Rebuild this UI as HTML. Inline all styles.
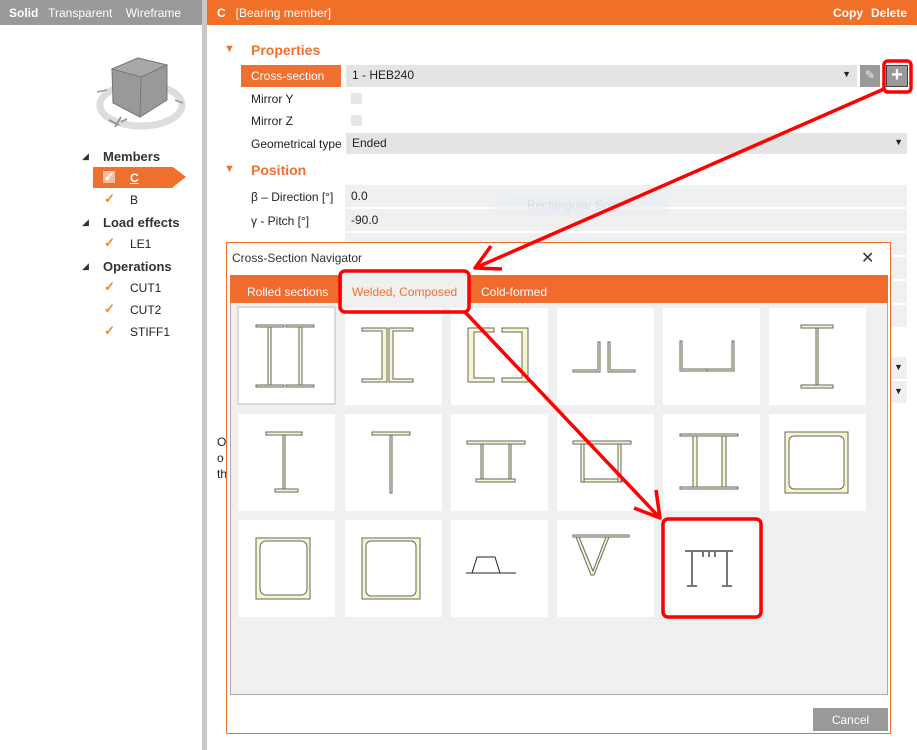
<!DOCTYPE html>
<html><head><meta charset="utf-8"><style>
*{margin:0;padding:0;box-sizing:border-box}
body{width:917px;height:750px;position:relative;overflow:hidden;background:#fff;font-family:"Liberation Sans",sans-serif;font-size:12px;color:#222}
.a{position:absolute}
.or{color:#f07030}
.row{position:absolute;left:345px;right:10px;height:22px;background:#f0f0f0;padding:4px 6px}
.lbl{position:absolute;left:251px}
.ck{position:absolute;left:104px;color:#f08a20;font-size:13px;font-weight:bold}
</style></head><body>
<div class="a" style="left:0;top:0;width:202px;height:25px;background:#999;color:#fff;font-size:12px;padding:6px 9px;white-space:nowrap"><b>Solid</b>&nbsp;&nbsp; Transparent &nbsp;&nbsp; Wireframe</div>
<div class="a" style="left:202px;top:0;width:5px;height:750px;background:#c8c8c8"></div>
<!-- cube -->
<svg class="a" style="left:95px;top:52px" width="100" height="80">
<ellipse cx="46" cy="53" rx="41" ry="21" fill="none" stroke="#ddd" stroke-width="7"/>
<polygon points="17,17 43,6 72,13 72,48 45,65 18,51" fill="#999" stroke="#777"/>
<polygon points="17,17 43,6 72,13 46,25" fill="#a8a8a8" stroke="#777"/>
<line x1="46" y1="25" x2="45" y2="65" stroke="#777"/>
<path d="M20,75 L26,65 M14,68 l10,5 M26,70 l6,-3" stroke="#999" stroke-width="2" fill="none"/>
<path d="M2,40 l10,-2 M80,48 l8,3" stroke="#999" stroke-width="1.5"/>
</svg>
<div class="a" style="left:82px;top:151px;font-size:9px;color:#333">◢</div>
<div class="a" style="left:103px;top:149px;font-weight:bold;font-size:13px;color:#333">Members</div>
<div class="a" style="left:93px;top:167px;width:80px;height:21px;background:#f07030"></div>
<div class="a" style="left:173px;top:167px;width:0;height:0;border-top:10.5px solid transparent;border-bottom:10.5px solid transparent;border-left:13px solid #f07030"></div>
<div class="a" style="left:103px;top:171px;width:12px;height:12px;background:#f6c0a0"></div>
<div class="ck" style="top:169px;color:#fff">✓</div>
<div class="a" style="left:130px;top:171px;color:#fff;text-decoration:underline;font-weight:bold">C</div>
<div class="ck" style="top:191px">✓</div><div class="a" style="left:130px;top:193px">B</div>
<div class="a" style="left:82px;top:217px;font-size:9px;color:#333">◢</div>
<div class="a" style="left:103px;top:215px;font-weight:bold;font-size:13px;color:#333">Load effects</div>
<div class="ck" style="top:235px">✓</div><div class="a" style="left:130px;top:237px">LE1</div>
<div class="a" style="left:82px;top:261px;font-size:9px;color:#333">◢</div>
<div class="a" style="left:103px;top:259px;font-weight:bold;font-size:13px;color:#333">Operations</div>
<div class="ck" style="top:279px">✓</div><div class="a" style="left:130px;top:281px">CUT1</div>
<div class="ck" style="top:301px">✓</div><div class="a" style="left:130px;top:303px">CUT2</div>
<div class="ck" style="top:323px">✓</div><div class="a" style="left:130px;top:325px">STIFF1</div>
<div class="a" style="left:207px;top:0;width:710px;height:25px;background:#f07028;color:#fff;padding:6px 10px;font-size:12px"><b>C</b>&nbsp;&nbsp; [Bearing member]</div>
<div class="a" style="left:833px;top:6px;color:#fff;font-weight:bold">Copy</div>
<div class="a" style="left:871px;top:6px;color:#fff;font-weight:bold">Delete</div>
<div class="a or" style="left:224px;top:43px;font-size:11px">▼</div>
<div class="a or" style="left:251px;top:42px;font-size:14px;font-weight:bold">Properties</div>
<div class="a" style="left:241px;top:65px;width:100px;height:22px;background:#f07030;color:#fff;padding:4px 10px">Cross-section</div>
<div class="a" style="left:346px;top:65px;width:511px;height:22px;background:#e4e4e4;padding:3px 6px">1 - HEB240<span style="position:absolute;right:6px;top:4px;font-size:9px">▼</span></div>
<div class="a" style="left:860px;top:65px;width:20px;height:22px;background:#999;color:#eee;text-align:center;padding-top:3px">✎</div>
<div class="a" style="left:886px;top:65px;width:22px;height:22px;background:#999;border:1px solid #444;color:#fff;font-size:20px;line-height:18px;text-align:center;font-weight:bold">+</div>
<div class="lbl" style="top:92px">Mirror Y</div><div class="a" style="left:351px;top:93px;width:11px;height:11px;background:#e6e6e6;border-radius:2px"></div>
<div class="lbl" style="top:114px">Mirror Z</div><div class="a" style="left:351px;top:115px;width:11px;height:11px;background:#e6e6e6;border-radius:2px"></div>
<div class="lbl" style="top:137px">Geometrical type</div>
<div class="a" style="left:346px;top:133px;width:561px;height:21px;background:#e4e4e4;padding:3px 6px">Ended<span style="position:absolute;right:4px;top:4px;font-size:9px">▼</span></div>
<div class="a or" style="left:224px;top:163px;font-size:11px">▼</div>
<div class="a or" style="left:251px;top:162px;font-size:14px;font-weight:bold">Position</div>
<div class="lbl" style="top:190px">β – Direction [°]</div><div class="row" style="top:185px">0.0</div>
<div class="lbl" style="top:214px">γ - Pitch [°]</div><div class="row" style="top:209px">-90.0</div>
<div class="a" style="left:495px;top:194px;width:173px;height:22px;background:#e8eef2;opacity:.6;color:#ccd;padding:4px 32px">Rectangular Snip</div>
<div class="row" style="top:233px"></div><div class="row" style="top:257px"></div><div class="row" style="top:281px"></div><div class="row" style="top:305px"></div>
<div class="row" style="top:357px;left:890px;width:17px;right:auto;font-size:9px;padding:5px 4px">▼</div>
<div class="row" style="top:381px;left:890px;width:17px;right:auto;font-size:9px;padding:5px 4px">▼</div>
<div class="a" style="left:217px;top:434px;line-height:16px">O<br>o<br>th</div>
<div class="a" style="left:226px;top:242px;width:665px;height:492px;background:#fff;border:1px solid #f07030"></div>
<div class="a" style="left:232px;top:251px;color:#333;font-size:12px">Cross-Section Navigator</div>
<div class="a" style="left:861px;top:248px;font-size:16px;color:#333">✕</div>
<div class="a" style="left:230px;top:275px;width:658px;height:420px;background:#f0f0f0;border:1px solid #aaa"></div>
<div class="a" style="left:230px;top:275px;width:658px;height:28px;background:#f06c2e"></div>
<div class="a" style="left:247px;top:285px;color:#fff">Rolled sections</div>
<div class="a" style="left:342px;top:275px;width:128px;height:33px;background:#f0f0f0"></div>
<div class="a or" style="left:352px;top:285px">Welded, Composed</div>
<div class="a" style="left:481px;top:285px;color:#fff">Cold-formed</div>
<div class="a" style="left:813px;top:708px;width:75px;height:23px;background:#999;color:#fff;text-align:center;padding-top:5px">Cancel</div>
<svg class="a" style="left:0;top:0" width="917" height="750" fill="#f8f6cc" stroke="#666" stroke-width="1">
<g>
<rect x="238" y="307" width="97" height="97" fill="#fff" stroke="#bbb"/>
<rect x="345" y="308" width="97" height="97" fill="#fff" stroke="none"/>
<rect x="451" y="308" width="97" height="97" fill="#fff" stroke="none"/>
<rect x="557" y="308" width="97" height="97" fill="#fff" stroke="none"/>
<rect x="663" y="308" width="97" height="97" fill="#fff" stroke="none"/>
<rect x="769" y="308" width="97" height="97" fill="#fff" stroke="none"/>
<rect x="238" y="414" width="97" height="97" fill="#fff" stroke="none"/>
<rect x="345" y="414" width="97" height="97" fill="#fff" stroke="none"/>
<rect x="451" y="414" width="97" height="97" fill="#fff" stroke="none"/>
<rect x="557" y="414" width="97" height="97" fill="#fff" stroke="none"/>
<rect x="663" y="414" width="97" height="97" fill="#fff" stroke="none"/>
<rect x="769" y="414" width="97" height="97" fill="#fff" stroke="none"/>
<rect x="238" y="520" width="97" height="97" fill="#fff" stroke="none"/>
<rect x="345" y="520" width="97" height="97" fill="#fff" stroke="none"/>
<rect x="451" y="520" width="97" height="97" fill="#fff" stroke="none"/>
<rect x="557" y="520" width="97" height="97" fill="#fff" stroke="none"/>
<rect x="663" y="520" width="97" height="97" fill="#fff" stroke="none"/>
</g>
<rect x="256" y="325" width="28" height="2"/><rect x="286" y="325" width="28" height="2"/><rect x="256" y="385" width="28" height="2"/><rect x="286" y="385" width="28" height="2"/>
<rect x="268" y="327" width="3" height="58"/><rect x="299" y="327" width="3" height="58"/>
<path d="M362,328h25v54h-25v-3h20v-48h-20z M413,328h-24v54h24v-3h-20v-48h20z"/>
<path d="M468,328h26v4h-20v46h20v4h-26z M528,328h-26v4h20v46h-20v4h26z"/>
<path d="M573,370h25v-28h2v30h-27z M635,370h-25v-28h-2v30h27z"/>
<path d="M680,341h2v28h25v2h-27z M734,341h-2v28h-25v2h27z"/>
<rect x="801" y="325" width="32" height="3"/><rect x="801" y="385" width="32" height="3"/><rect x="816" y="328" width="2" height="57"/>
<rect x="266" y="432" width="36" height="3"/><rect x="275" y="489" width="23" height="3"/><rect x="283" y="435" width="2" height="54"/>
<rect x="372" y="432" width="38" height="3"/><rect x="390" y="435" width="2" height="58"/>
<rect x="467" y="441" width="58" height="3"/><rect x="476" y="479" width="39" height="3"/><rect x="481" y="444" width="2" height="35"/><rect x="509" y="444" width="2" height="35"/>
<rect x="573" y="441" width="58" height="3"/><rect x="582" y="479" width="40" height="3"/><rect x="581" y="444" width="3" height="38"/><rect x="618" y="444" width="3" height="38"/>
<path d="M680,434h58v2h-58z M680,487h58v2h-58z"/><rect x="693" y="436" width="4" height="51"/><rect x="722" y="436" width="4" height="51"/>
<rect x="785" y="432" width="63" height="61"/><rect x="789" y="436" width="55" height="53" rx="5" fill="#fff"/>
<rect x="256" y="538" width="54" height="61"/><rect x="260" y="541" width="47" height="54" rx="6" fill="#fff"/>
<rect x="362" y="538" width="58" height="61"/><rect x="366" y="541" width="50" height="55" rx="5" fill="#fff"/>
<path d="M466,573h50 M472,573l5,-16h18l5,16" fill="none" stroke="#222"/>
<path d="M573,535h56v2h-56z" /><path d="M576,537l15,38l3,0l15,-38h-3l-13,34l-14,-34z"/>
<path d="M685,551h48" stroke="#777" stroke-width="2"/><path d="M692,551v34 M727,551v34 M703,551v6 M709,551v6 M715,551v6 M687,586h10 M722,586h10" stroke="#777" stroke-width="2" fill="none"/>
<g fill="none" stroke="#f00" stroke-width="3.5" stroke-linejoin="round">
<rect x="884" y="61" width="27" height="31" rx="4"/>
<rect x="340" y="271" width="129" height="41" rx="5"/>
<rect x="663" y="519" width="98" height="98" rx="5"/>
<path d="M884,89 L475,268"/>
<path d="M491,246 L475,268 L502,269"/>
<path d="M465,312 L660,518"/>
<path d="M634,508 L660,518 L656,490"/>
</g>
</svg>
</body></html>
